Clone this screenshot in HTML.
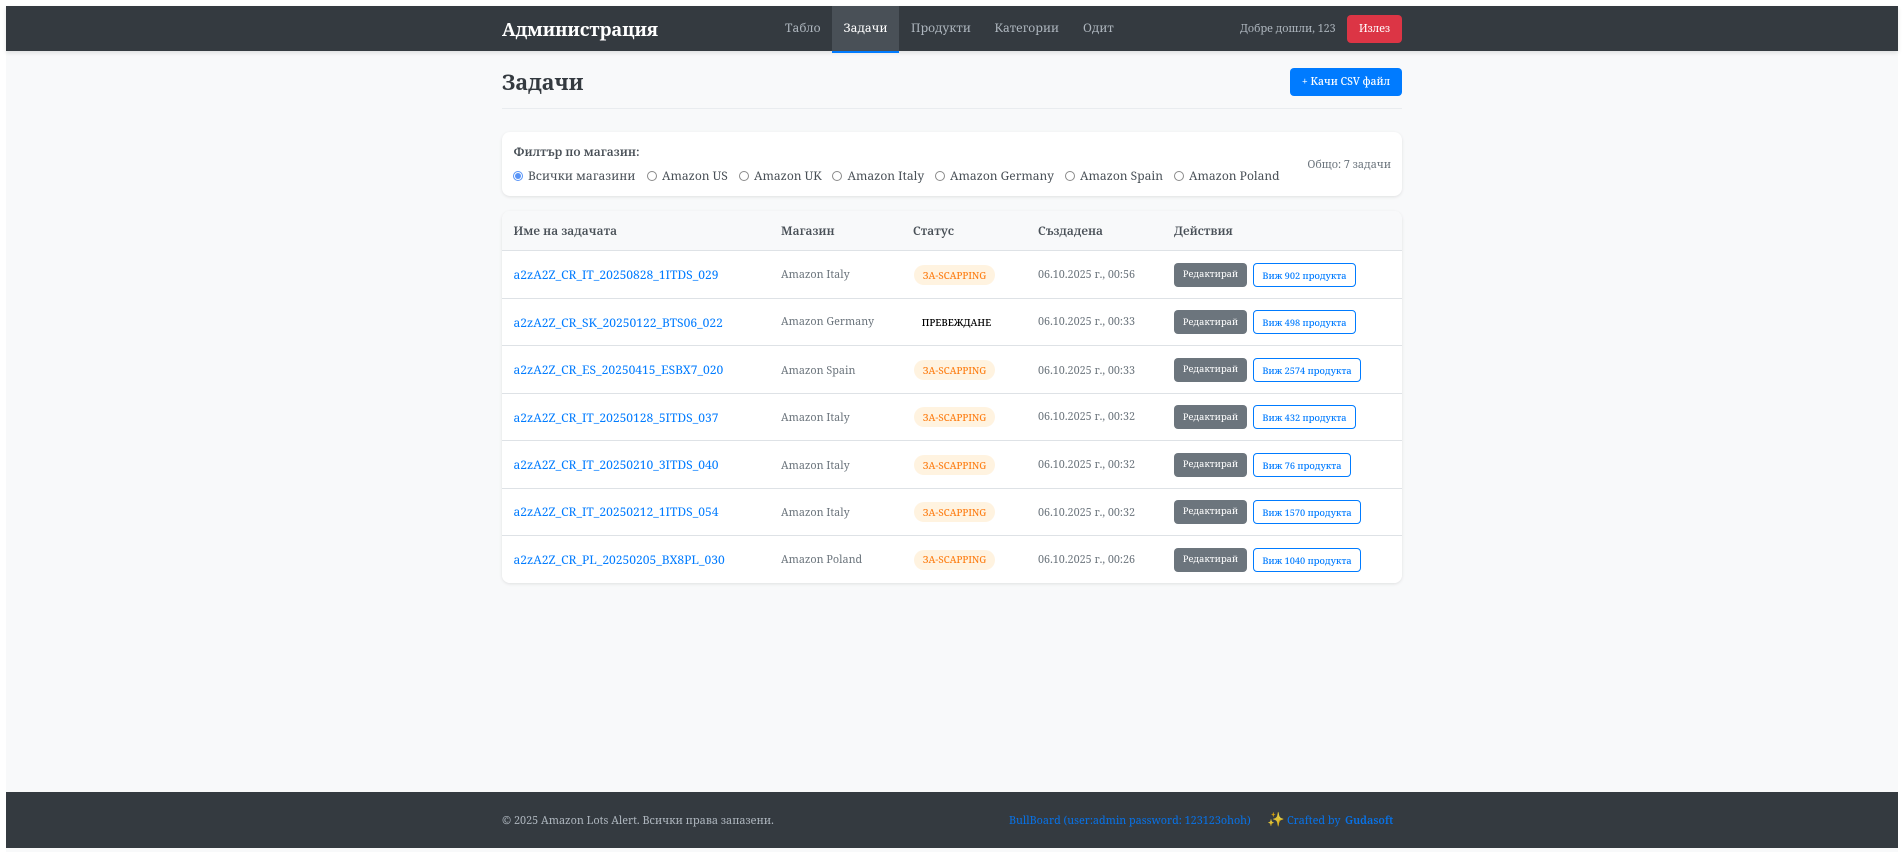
<!DOCTYPE html>
<html lang="bg"><head><meta charset="utf-8"><title>Задачи</title>
<style>
*{box-sizing:border-box}
html,body{margin:0;padding:0;background:#fff}
body{width:1904px;height:858px;overflow:hidden;position:relative;font-family:"Noto Serif","Noto Serif CJK SC","Liberation Serif",serif;color:#343a40}
.abs{position:absolute;white-space:nowrap}
#bg{left:6px;top:6px;width:1892px;height:846px;background:#f8f9fa}
#nav{left:6px;top:6px;width:1892px;height:45px;background:#343a40;box-shadow:0 2px 4px rgba(0,0,0,.1)}
#foot{left:6px;top:792px;width:1892px;height:56px;background:#343a40}
.tab{top:6px;height:47px;line-height:44px;font-size:12px;color:#adb5bd}
#active{left:832px;width:67px;background:#495057;border-bottom:2px solid #007bff;color:#fff;text-align:center}
.btn{border-radius:4px;text-align:center}
.card{background:#fff;border-radius:8px;box-shadow:0 1px 3px rgba(0,0,0,.1)}
input{position:absolute;margin:0;width:10px;height:10px;top:171px;accent-color:#3b82f6;opacity:.85}
.lbl{top:166px;line-height:20px;font-size:12.05px;color:#495057}
.row{left:502px;width:900px;height:47.5px;border-bottom:1.5px solid #dee2e6;background:#fff}
.name{left:513.5px;font-size:12.07px;color:#007bff;line-height:20px}
.store,.date{font-size:10.8px;color:#6c757d;line-height:20px}
.store{left:781px}.date{left:1038px}
.badge{left:914px;width:81px;height:20px;line-height:21px;border-radius:10px;background:#fff3e0;color:#fd7e14;font-size:9.6px;font-weight:500;text-align:center}
.badge.t{background:none;color:#000;left:916px}
.edit{left:1174px;width:73px;height:24px;line-height:21px;background:#6c757d;color:#fff;font-size:9.2px}
.edit.d{line-height:23px}
.view{left:1253px;height:24px;line-height:23px;border:1.5px solid #007bff;background:#fff;color:#007bff;font-size:9.2px;font-weight:500}
.view.d{line-height:24px}
.hd{top:221px;line-height:20px;font-size:12px;font-weight:600;color:#495057}
.lk{top:811px;line-height:20px;color:#0772e8}
</style></head><body>
<div class="abs" id="bg"></div>
<div class="abs" id="nav"></div>
<div class="abs" style="left:502px;top:15px;line-height:30px;font-size:18.3px;font-weight:700;color:#fff">Администрация</div>
<div class="abs tab" style="left:785px">Табло</div>
<div class="abs tab" id="active">Задачи</div>
<div class="abs tab" style="left:911px">Продукти</div>
<div class="abs tab" style="left:994.5px">Категории</div>
<div class="abs tab" style="left:1083px">Одит</div>
<div class="abs" style="left:1240px;top:19px;line-height:20px;font-size:10.7px;color:#adb5bd">Добре дошли, 123</div>
<div class="abs btn" style="left:1347px;top:15px;width:55px;height:28px;line-height:29px;background:#dc3545;color:#fff;font-size:10.7px">Излез</div>

<div class="abs" style="left:502px;top:65px;line-height:36px;font-size:21.6px;font-weight:700;color:#343a40">Задачи</div>
<div class="abs btn" style="left:1290px;top:68px;width:112px;height:28px;line-height:28px;background:#007bff;color:#fff;font-size:10.5px;font-weight:500">+ Качи CSV файл</div>
<div class="abs" style="left:502px;top:108px;width:900px;height:1px;background:#e9ecef"></div>

<div class="abs card" style="left:502px;top:132px;width:900px;height:64px"></div>
<div class="abs" style="left:513.5px;top:142px;line-height:20px;font-size:12.05px;font-weight:600;color:#495057">Филтър по магазин:</div>
<input type="radio" name="s" checked style="left:513px">
<div class="abs lbl" style="left:528px">Всички магазини</div>
<input type="radio" name="s" style="left:647px">
<div class="abs lbl" style="left:662px">Amazon US</div>
<input type="radio" name="s" style="left:739px">
<div class="abs lbl" style="left:754px">Amazon UK</div>
<input type="radio" name="s" style="left:832px">
<div class="abs lbl" style="left:847.5px">Amazon Italy</div>
<input type="radio" name="s" style="left:935px">
<div class="abs lbl" style="left:950px">Amazon Germany</div>
<input type="radio" name="s" style="left:1065px">
<div class="abs lbl" style="left:1080px">Amazon Spain</div>
<input type="radio" name="s" style="left:1174px">
<div class="abs lbl" style="left:1189px">Amazon Poland</div>
<div class="abs" style="right:513px;top:155px;line-height:20px;font-size:10.8px;color:#6c757d">Общо: 7 задачи</div>

<div class="abs card" style="left:502px;top:211px;width:900px;height:372px;overflow:hidden"></div>
<div class="abs" style="left:502px;top:211px;width:900px;height:40px;background:#f8f9fa;border-bottom:1.5px solid #dee2e6;border-radius:8px 8px 0 0"></div>
<div class="abs hd" style="left:513.5px">Име на задачата</div>
<div class="abs hd" style="left:781px">Магазин</div>
<div class="abs hd" style="left:913px">Статус</div>
<div class="abs hd" style="left:1038px">Създадена</div>
<div class="abs hd" style="left:1174px">Действия</div>

<div class="abs row" style="top:251px"></div>
<div class="abs name" style="top:265px">a2zA2Z_CR_IT_20250828_1ITDS_029</div>
<div class="abs store" style="top:265px">Amazon Italy</div>
<div class="abs badge" style="top:265px">ЗА-SCAPPING</div>
<div class="abs date" style="top:265px">06.10.2025 г., 00:56</div>
<div class="abs btn edit" style="top:263px">Редактирай</div>
<div class="abs btn view" style="top:263px;width:103px">Виж 902 продукта</div>

<div class="abs row" style="top:298.5px"></div>
<div class="abs name" style="top:313px">a2zA2Z_CR_SK_20250122_BTS06_022</div>
<div class="abs store" style="top:312px">Amazon Germany</div>
<div class="abs badge t" style="top:312px">ПРЕВЕЖДАНЕ</div>
<div class="abs date" style="top:312px">06.10.2025 г., 00:33</div>
<div class="abs btn edit d" style="top:310px">Редактирай</div>
<div class="abs btn view d" style="top:310px;width:103px">Виж 498 продукта</div>

<div class="abs row" style="top:346px"></div>
<div class="abs name" style="top:360px">a2zA2Z_CR_ES_20250415_ESBX7_020</div>
<div class="abs store" style="top:361px">Amazon Spain</div>
<div class="abs badge" style="top:360px">ЗА-SCAPPING</div>
<div class="abs date" style="top:361px">06.10.2025 г., 00:33</div>
<div class="abs btn edit" style="top:358px">Редактирай</div>
<div class="abs btn view d" style="top:358px;width:108px">Виж 2574 продукта</div>

<div class="abs row" style="top:393.5px"></div>
<div class="abs name" style="top:408px">a2zA2Z_CR_IT_20250128_5ITDS_037</div>
<div class="abs store" style="top:408px">Amazon Italy</div>
<div class="abs badge" style="top:407px">ЗА-SCAPPING</div>
<div class="abs date" style="top:407px">06.10.2025 г., 00:32</div>
<div class="abs btn edit d" style="top:405px">Редактирай</div>
<div class="abs btn view" style="top:405px;width:103px">Виж 432 продукта</div>

<div class="abs row" style="top:441px"></div>
<div class="abs name" style="top:455px">a2zA2Z_CR_IT_20250210_3ITDS_040</div>
<div class="abs store" style="top:456px">Amazon Italy</div>
<div class="abs badge" style="top:455px">ЗА-SCAPPING</div>
<div class="abs date" style="top:455px">06.10.2025 г., 00:32</div>
<div class="abs btn edit" style="top:453px">Редактирай</div>
<div class="abs btn view" style="top:453px;width:98px">Виж 76 продукта</div>

<div class="abs row" style="top:488.5px"></div>
<div class="abs name" style="top:502px">a2zA2Z_CR_IT_20250212_1ITDS_054</div>
<div class="abs store" style="top:503px">Amazon Italy</div>
<div class="abs badge" style="top:502px">ЗА-SCAPPING</div>
<div class="abs date" style="top:503px">06.10.2025 г., 00:32</div>
<div class="abs btn edit" style="top:500px">Редактирай</div>
<div class="abs btn view" style="top:500px;width:108px">Виж 1570 продукта</div>

<div class="abs row" style="top:536px;height:47px;border-bottom:0;border-radius:0 0 8px 8px"></div>
<div class="abs name" style="top:550px">a2zA2Z_CR_PL_20250205_BX8PL_030</div>
<div class="abs store" style="top:550px">Amazon Poland</div>
<div class="abs badge" style="top:550px;line-height:20px">ЗА-SCAPPING</div>
<div class="abs date" style="top:550px">06.10.2025 г., 00:26</div>
<div class="abs btn edit" style="top:548px">Редактирай</div>
<div class="abs btn view" style="top:548px;width:108px">Виж 1040 продукта</div>

<div class="abs" id="foot"></div>
<div class="abs" style="left:502px;top:811px;line-height:20px;font-size:10.85px;color:#adb5bd">© 2025 Amazon Lots Alert. Всички права запазени.</div>
<div class="abs lk" style="left:1009px;font-size:10.8px">BullBoard (user:admin password: 123123ohoh)</div>
<div class="abs" style="left:1267px;top:810px;line-height:20px;font-size:14px;opacity:.85"><span style="font-family:'Noto Color Emoji',sans-serif">✨</span></div>
<div class="abs lk" style="left:1287px;font-size:10.9px">Crafted by</div>
<div class="abs lk" style="left:1345px;font-size:10.8px;font-weight:600">Gudasoft</div>
</body></html>
